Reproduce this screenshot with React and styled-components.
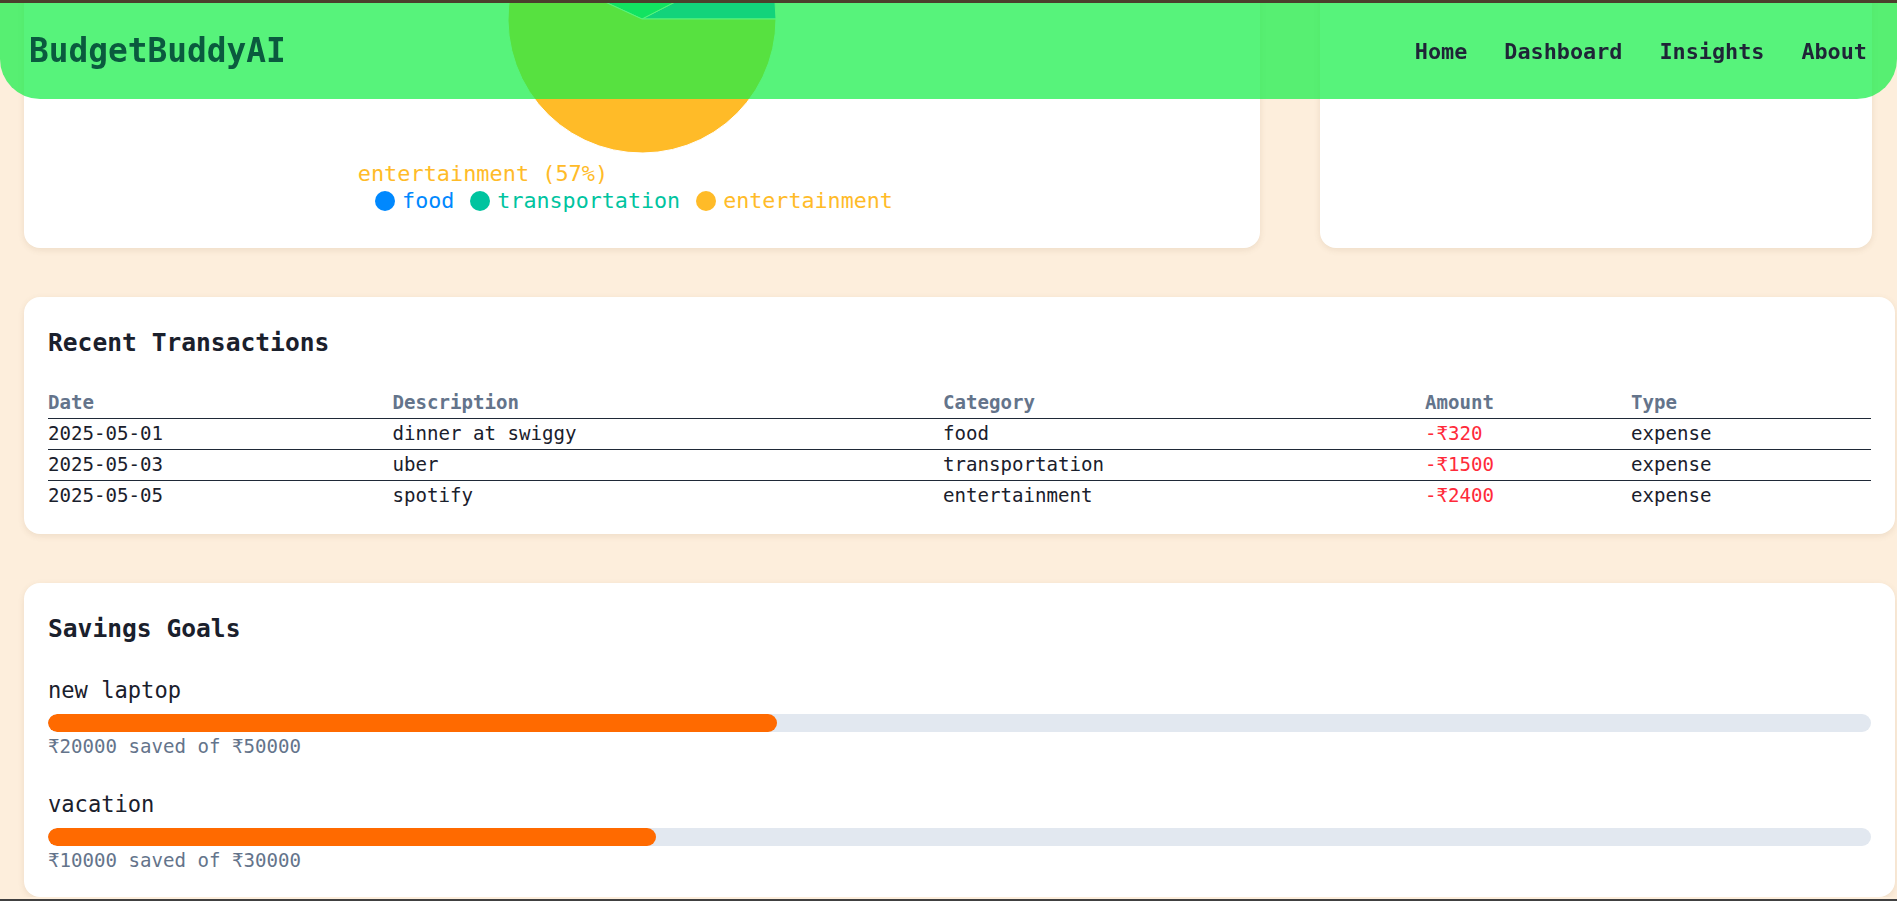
import React from 'react';
import styled, { createGlobalStyle } from 'styled-components';

const GlobalStyle = createGlobalStyle`
  html, body {
    margin: 0;
    padding: 0;
    background: #fdeedc;
    font-family: "DejaVu Sans Mono", "Liberation Mono", monospace;
    color: #1a202c;
    overflow: hidden;
  }

  /* window frame edges seen in the screenshot */
  body::before,
  body::after {
    content: "";
    position: fixed;
    left: 0;
    right: 0;
    z-index: 20;
  }
  body::before {
    top: 0;
    height: 3px;
    background: #4b3f2c;
  }
  body::after {
    bottom: 0;
    height: 2px;
    background: #404040;
  }
`;

const Header = styled.header`
  position: fixed;
  top: 0;
  left: 0;
  right: 0;
  z-index: 10;
  height: 99px;
  box-sizing: border-box;
  padding: 3px 30px 0 29px;
  display: flex;
  align-items: center;
  justify-content: space-between;
  background: rgba(24, 238, 74, 0.73);
  border-radius: 0 0 40px 40px;
`;

const Logo = styled.div`
  font-size: 32.8px;
  font-weight: bold;
  color: #0a5a3e;
`;

const Nav = styled.nav`
  display: flex;
  gap: 37px;
`;

const NavLink = styled.a`
  font-size: 21.8px;
  font-weight: bold;
  color: #1f2437;
  text-decoration: none;
`;

const Main = styled.main`
  display: flex;
  flex-direction: column;
  gap: 49px;
  padding: 0 2px 0 24px;
`;

const TopRow = styled.div`
  display: grid;
  grid-template-columns: 1236px 552px;
  gap: 60px;
  margin-top: -152px;
`;

const Card = styled.section`
  background: #fff;
  border-radius: 16px;
  box-shadow: 0 2px 6px rgba(120, 90, 50, 0.12);
  padding: 24px;
  box-sizing: border-box;
`;

const ChartCard = styled(Card)`
  padding-bottom: 35px;
`;

const TableCard = styled(Card)`
  padding-bottom: 23px;
`;

const SideCard = styled(Card)`
  height: 400px;
`;

const ChartSvg = styled.svg`
  display: block;
  width: 1188px;
  height: 316px;
  font-family: "DejaVu Sans Mono", monospace;
  font-size: 21.9px;
`;

const Legend = styled.ul`
  display: flex;
  justify-content: center;
  align-items: center;
  height: 24px;
  margin: 1px 0 0;
  padding: 0;
  list-style: none;
`;

const LegendItem = styled.li`
  display: flex;
  align-items: center;
  margin-right: 16px;
  font-size: 21.7px;
  line-height: 24px;
  color: ${p => p.color};
`;

const LegendDot = styled.span`
  width: 20px;
  height: 20px;
  border-radius: 50%;
  margin-right: 7px;
  background: ${p => p.color};
`;

const Title = styled.h2`
  margin: 7px 0 ${p => p.gap || '28.5px'};
  font-size: 24.6px;
  line-height: 30px;
  font-weight: bold;
  color: #1a202c;
`;

const Table = styled.table`
  width: 100%;
  border-collapse: collapse;
  table-layout: fixed;
  font-size: 19.1px;
  line-height: 22px;
`;

const Th = styled.th`
  text-align: left;
  padding: 4px 0;
  color: #64748b;
  font-weight: bold;
`;

const Td = styled.td`
  padding: 4px 0;
  border-top: 1px solid #1f2937;
  color: ${p => (p.negative ? '#ff2a3a' : '#1a202c')};
`;

const GoalList = styled.div`
  padding-top: 5px;
`;

const Goal = styled.div`
  & + & {
    margin-top: 32px;
  }
`;

const GoalName = styled.div`
  font-size: 22.1px;
  line-height: 26px;
  margin-bottom: 10.6px;
  color: #1a202c;
`;

const Track = styled.div`
  height: 18px;
  border-radius: 9px;
  background: #e2e8f0;
  overflow: hidden;
`;

const Fill = styled.div`
  height: 100%;
  border-radius: 9px;
  background: #ff6a00;
`;

const GoalAmount = styled.div`
  margin-top: 3.4px;
  font-size: 19.1px;
  line-height: 24px;
  color: #64748b;
`;

const COLORS = ['#0088FE', '#00C49F', '#FFBB28'];

const transactions = [
  { date: '2025-05-01', description: 'dinner at swiggy', category: 'food', amount: 320, type: 'expense' },
  { date: '2025-05-03', description: 'uber', category: 'transportation', amount: 1500, type: 'expense' },
  { date: '2025-05-05', description: 'spotify', category: 'entertainment', amount: 2400, type: 'expense' },
];

const goals = [
  { name: 'new laptop', saved: 20000, target: 50000 },
  { name: 'vacation', saved: 10000, target: 30000 },
];

const polar = (cx, cy, r, deg) => {
  const a = (deg * Math.PI) / 180;
  return [cx + r * Math.cos(a), cy - r * Math.sin(a)];
};

const slicePath = (cx, cy, r, a1, a2) => {
  const [x1, y1] = polar(cx, cy, r, a1);
  const [x2, y2] = polar(cx, cy, r, a2);
  const large = a2 - a1 > 180 ? 1 : 0;
  return `M ${cx} ${cy} L ${x1} ${y1} A ${r} ${r} 0 ${large} 0 ${x2} ${y2} Z`;
};

const PieChart = () => {
  const cx = 594;
  const cy = 147;
  const r = 134;
  const total = transactions.reduce((s, t) => s + t.amount, 0);
  let start = 0;
  const slices = transactions.map((t, i) => {
    const sweep = (t.amount / total) * 360;
    const slice = { ...t, start, end: start + sweep, color: COLORS[i] };
    start += sweep;
    return slice;
  });

  // only the labels that fall below the chart's centre are in view
  const labels = slices
    .map(s => {
      const mid = (s.start + s.end) / 2;
      const [x, y] = polar(cx, cy, 158, mid);
      return { ...s, x, y, pct: Math.round((s.amount / total) * 100) };
    })
    .filter(l => l.y > cy);

  return (
    <ChartSvg viewBox="0 0 1188 316">
      {slices.map(s => (
        <path key={s.category} d={slicePath(cx, cy, r, s.start, s.end)} fill={s.color} stroke="#fff" strokeWidth="1" />
      ))}
      {labels.map(l => (
        <text key={l.category} x={l.x} y={l.y} fill={l.color} textAnchor={l.x > cx ? 'start' : 'end'} dominantBaseline="central">
          {`${l.category} (${l.pct}%)`}
        </text>
      ))}
    </ChartSvg>
  );
};

const App = () => (
  <>
    <GlobalStyle />
    <Header>
      <Logo>BudgetBuddyAI</Logo>
      <Nav>
        <NavLink href="#">Home</NavLink>
        <NavLink href="#">Dashboard</NavLink>
        <NavLink href="#">Insights</NavLink>
        <NavLink href="#">About</NavLink>
      </Nav>
    </Header>

    <Main>
      <TopRow>
        <ChartCard>
          <PieChart />
          <Legend>
            {transactions.map((t, i) => (
              <LegendItem key={t.category} color={COLORS[i]}>
                <LegendDot color={COLORS[i]} />
                {t.category}
              </LegendItem>
            ))}
          </Legend>
        </ChartCard>
        <SideCard />
      </TopRow>

      <TableCard>
        <Title gap="29.5px">Recent Transactions</Title>
        <Table>
          <colgroup>
            <col style={{ width: 344.6 }} />
            <col style={{ width: 550.4 }} />
            <col style={{ width: 482 }} />
            <col style={{ width: 206 }} />
            <col />
          </colgroup>
          <thead>
            <tr>
              <Th>Date</Th>
              <Th>Description</Th>
              <Th>Category</Th>
              <Th>Amount</Th>
              <Th>Type</Th>
            </tr>
          </thead>
          <tbody>
            {transactions.map(t => (
              <tr key={t.date}>
                <Td>{t.date}</Td>
                <Td>{t.description}</Td>
                <Td>{t.category}</Td>
                <Td negative>-₹{t.amount}</Td>
                <Td>{t.type}</Td>
              </tr>
            ))}
          </tbody>
        </Table>
      </TableCard>

      <Card>
        <Title>Savings Goals</Title>
        <GoalList>
          {goals.map(g => (
            <Goal key={g.name}>
              <GoalName>{g.name}</GoalName>
              <Track>
                <Fill style={{ width: `${(g.saved / g.target) * 100}%` }} />
              </Track>
              <GoalAmount>₹{g.saved} saved of ₹{g.target}</GoalAmount>
            </Goal>
          ))}
        </GoalList>
      </Card>
    </Main>
  </>
);

export default App;
